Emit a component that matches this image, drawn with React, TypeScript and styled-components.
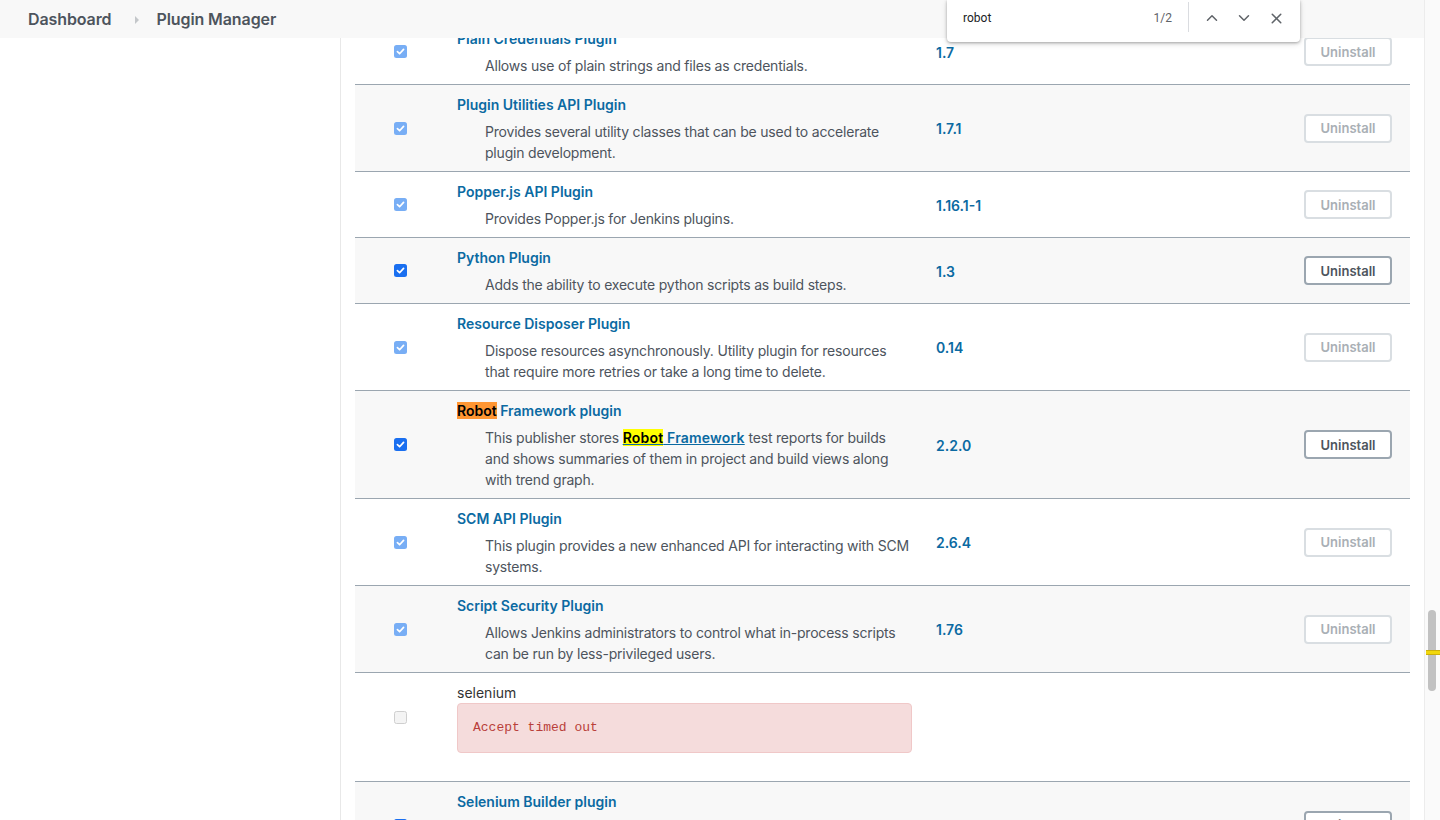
import React from "react";
import styled, { createGlobalStyle } from "styled-components";
import { ChevronUp, ChevronDown, X } from "lucide-react";

const GlobalStyle = createGlobalStyle`
  html, body {
    margin: 0;
    padding: 0;
    background: #ffffff;
  }
  body {
    font-family: "Inter", "Noto Sans", sans-serif;
    color: #4d545d;
  }
  * {
    box-sizing: border-box;
  }
`;

interface Plugin {
  name: string;
  description?: React.ReactNode;
  version?: string;
  canUninstall: boolean;
  checked: boolean;
  error?: string;
}

// description with the find-in-page highlight inside the link
function RobotDescription() {
  return (
    <>
      This publisher stores{" "}
      <DescLink href="#">
        <FindMatch>Robot</FindMatch> Framework
      </DescLink>{" "}
      test reports for builds and shows summaries of them in project and build
      views along with trend graph.
    </>
  );
}

const plugins: Plugin[] = [
  {
    name: "Plain Credentials Plugin",
    description: "Allows use of plain strings and files as credentials.",
    version: "1.7",
    canUninstall: false,
    checked: true,
  },
  {
    name: "Plugin Utilities API Plugin",
    description:
      "Provides several utility classes that can be used to accelerate plugin development.",
    version: "1.7.1",
    canUninstall: false,
    checked: true,
  },
  {
    name: "Popper.js API Plugin",
    description: "Provides Popper.js for Jenkins plugins.",
    version: "1.16.1-1",
    canUninstall: false,
    checked: true,
  },
  {
    name: "Python Plugin",
    description: "Adds the ability to execute python scripts as build steps.",
    version: "1.3",
    canUninstall: true,
    checked: true,
  },
  {
    name: "Resource Disposer Plugin",
    description:
      "Dispose resources asynchronously. Utility plugin for resources that require more retries or take a long time to delete.",
    version: "0.14",
    canUninstall: false,
    checked: true,
  },
  {
    name: "Robot Framework plugin",
    description: <RobotDescription />,
    version: "2.2.0",
    canUninstall: true,
    checked: true,
  },
  {
    name: "SCM API Plugin",
    description:
      "This plugin provides a new enhanced API for interacting with SCM systems.",
    version: "2.6.4",
    canUninstall: false,
    checked: true,
  },
  {
    name: "Script Security Plugin",
    description:
      "Allows Jenkins administrators to control what in-process scripts can be run by less-privileged users.",
    version: "1.76",
    canUninstall: false,
    checked: true,
  },
  {
    name: "selenium",
    error: "Accept timed out",
    canUninstall: false,
    checked: false,
  },
  {
    name: "Selenium Builder plugin",
    description:
      "This plugin allows you to run Selenium Builder scripts as a build step in your Jenkins jobs.",
    canUninstall: true,
    checked: true,
  },
];

function PluginTitle({ name }: { name: string }) {
  if (name.startsWith("Robot ")) {
    return (
      <TitleLink href="#">
        <ActiveMatch>Robot</ActiveMatch>
        {name.slice(5)}
      </TitleLink>
    );
  }
  return <TitleLink href="#">{name}</TitleLink>;
}

function CheckBox({ checked, disabled }: { checked: boolean; disabled: boolean }) {
  return (
    <Box role="checkbox" aria-checked={checked} $checked={checked} $disabled={disabled}>
      {checked && (
        <svg width="9" height="9" viewBox="0 0 10 10">
          <path
            d="M1.6 5.2 L4 7.5 L8.4 2.6"
            fill="none"
            stroke="#ffffff"
            strokeWidth="1.9"
            strokeLinecap="round"
            strokeLinejoin="round"
          />
        </svg>
      )}
    </Box>
  );
}

function PluginRow({ plugin, index }: { plugin: Plugin; index: number }) {
  return (
    <Row $shaded={index % 2 === 1} $error={!!plugin.error}>
      <CheckCell>
        <CheckBox checked={plugin.checked} disabled={!plugin.canUninstall} />
      </CheckCell>
      <NameCell>
        {plugin.error ? (
          <>
            <PlainName>{plugin.name}</PlainName>
            <ErrorBox>{plugin.error}</ErrorBox>
          </>
        ) : (
          <>
            <PluginTitle name={plugin.name} />
            {plugin.description && <Description>{plugin.description}</Description>}
          </>
        )}
      </NameCell>
      <VersionCell>
        {plugin.version && <VersionLink href="#">{plugin.version}</VersionLink>}
      </VersionCell>
      <ActionCell>
        {!plugin.error && (
          <UninstallButton disabled={!plugin.canUninstall}>Uninstall</UninstallButton>
        )}
      </ActionCell>
    </Row>
  );
}

export default function App() {
  return (
    <>
      <GlobalStyle />
      <Viewport>
        <Main>
          <Body>
            <Sidebar />
            <Content>
              <PluginTable>
                {plugins.map((p, i) => (
                  <PluginRow key={p.name} plugin={p} index={i} />
                ))}
              </PluginTable>
            </Content>
          </Body>

          <Header>
            <Crumb href="#">Dashboard</Crumb>
            <CrumbArrow />
            <Crumb href="#">Plugin Manager</Crumb>
          </Header>

          <FindBar>
            <FindInput>robot</FindInput>
            <FindCount>1/2</FindCount>
            <FindDivider />
            <FindButton>
              <ChevronUp size={18} strokeWidth={2} />
            </FindButton>
            <FindButton>
              <ChevronDown size={18} strokeWidth={2} />
            </FindButton>
            <FindButton>
              <X size={17} strokeWidth={2.2} />
            </FindButton>
          </FindBar>
        </Main>

        <ScrollLane>
          <ScrollThumb />
          <ScrollMarker />
        </ScrollLane>
      </Viewport>
    </>
  );
}

const Viewport = styled.div`
  display: flex;
  width: 100%;
  height: 820px;
  overflow: hidden;
`;

const Main = styled.div`
  position: relative;
  flex: 1;
  height: 100%;
  overflow: hidden;
`;

const Header = styled.header`
  position: absolute;
  top: 0;
  left: 0;
  right: 0;
  height: 38px;
  display: flex;
  align-items: center;
  padding-left: 28px;
  background: #f8f8f8;
  z-index: 2;
`;

const Crumb = styled.a`
  font-size: 16px;
  font-weight: 600;
  color: #4d545d;
  text-decoration: none;
  letter-spacing: -0.1px;
`;

const CrumbArrow = styled.span`
  width: 0;
  height: 0;
  margin: 1px 17px 0 24px;
  border-top: 4px solid transparent;
  border-bottom: 4px solid transparent;
  border-left: 4px solid #c4c7ca;
`;

const Body = styled.div`
  display: flex;
  height: 100%;
`;

const Sidebar = styled.aside`
  width: 341px;
  flex-shrink: 0;
  border-right: 1px solid #e8e8e8;
`;

const Content = styled.main`
  flex: 1;
  padding: 19px 14px 0 14px;
`;

const PluginTable = styled.div`
  display: flex;
  flex-direction: column;
  width: 1055px;
`;

const Row = styled.div<{ $shaded: boolean; $error: boolean }>`
  display: grid;
  grid-template-columns: 90px 479px 1fr 124px;
  align-items: center;
  background: ${(p) => (p.$shaded ? "#f8f8f8" : "#ffffff")};
  border-bottom: 1px solid #9ba6b0;
  padding-bottom: ${(p) => (p.$error ? "20px" : "0")};
`;

const CheckCell = styled.div`
  display: flex;
  justify-content: center;
`;

const Box = styled.span<{ $checked: boolean; $disabled: boolean }>`
  display: inline-flex;
  align-items: center;
  justify-content: center;
  width: 13px;
  height: 13px;
  border-radius: 2.5px;
  background: ${(p) =>
    !p.$checked ? "#f4f4f4" : p.$disabled ? "#78aef5" : "#1a6ff0"};
  border: ${(p) => (p.$checked ? "none" : "1px solid #cfcfcf")};
`;

const NameCell = styled.div`
  padding: 10px 12px 8px 12px;
  font-size: 14px;
  line-height: 20px;
`;

const TitleLink = styled.a`
  display: block;
  width: fit-content;
  font-size: 14px;
  line-height: 20px;
  font-weight: 600;
  color: #0b6aa2;
  text-decoration: none;
`;

const ActiveMatch = styled.mark`
  background: #ff9632;
  color: #000000;
`;

const FindMatch = styled.mark`
  background: #ffff00;
  color: #000000;
`;

const Description = styled.div`
  margin-top: 6px;
  padding-left: 28px;
  font-size: 14px;
  line-height: 21px;
  letter-spacing: -0.2px;
  color: #4d545d;
`;

const DescLink = styled.a`
  color: #0b6aa2;
  font-weight: 600;
  letter-spacing: 0.2px;
  text-decoration: underline;
`;

const PlainName = styled.div`
  font-size: 14px;
  line-height: 20px;
  color: #333333;
`;

const ErrorBox = styled.pre`
  margin: 0;
  height: 50px;
  display: flex;
  align-items: center;
  padding: 0 15px;
  background: #f5dcdc;
  border: 1px solid #f0c8c8;
  border-radius: 4px;
  font-family: "Liberation Mono", monospace;
  font-size: 13px;
  color: #b93f3a;
`;

const VersionCell = styled.div`
  padding: 0 12px;
`;

const VersionLink = styled.a`
  font-size: 14px;
  font-weight: 600;
  color: #0b6aa2;
  text-decoration: none;
`;

const ActionCell = styled.div`
  display: flex;
  justify-content: flex-end;
  padding-right: 18px;
`;

const UninstallButton = styled.button`
  width: 88px;
  height: 29px;
  padding: 0;
  background: #ffffff;
  border: 2px solid ${(p) => (p.disabled ? "#d9dee2" : "#9ba6b0")};
  border-radius: 4px;
  font-family: "Inter", sans-serif;
  font-size: 13px;
  font-weight: 600;
  color: ${(p) => (p.disabled ? "#a9afb5" : "#4d545d")};
  cursor: ${(p) => (p.disabled ? "default" : "pointer")};
`;

const FindBar = styled.div`
  position: absolute;
  top: 0;
  left: 947px;
  width: 353px;
  height: 42px;
  display: flex;
  align-items: center;
  padding: 0 8px 0 16px;
  background: #ffffff;
  border-radius: 0 0 4px 4px;
  box-shadow: 0 1px 3px rgba(0, 0, 0, 0.3), 0 2px 6px rgba(0, 0, 0, 0.12);
  z-index: 3;
`;

const FindInput = styled.span`
  flex: 1;
  font-family: "Roboto", sans-serif;
  font-size: 12px;
  color: #202124;
  margin-top: -6px;
`;

const FindCount = styled.span`
  font-family: "Roboto", sans-serif;
  font-size: 12px;
  color: #5f6368;
  margin: -6px 16px 0 0;
`;

const FindDivider = styled.span`
  width: 1px;
  height: 30px;
  margin: -8px 7px 0 0;
  background: #dadce0;
`;

const FindButton = styled.span`
  display: flex;
  align-items: center;
  justify-content: center;
  width: 32px;
  margin-top: -6px;
  color: #5f6368;
`;

const ScrollLane = styled.div`
  position: relative;
  width: 16px;
  flex-shrink: 0;
  background: #fafafa;
  border-left: 1px solid #ececec;
`;

const ScrollThumb = styled.div`
  position: absolute;
  top: 610px;
  left: 3px;
  width: 8px;
  height: 81px;
  border-radius: 4px;
  background: #c1c1c1;
`;

const ScrollMarker = styled.div`
  position: absolute;
  top: 650px;
  left: 1px;
  right: 0;
  height: 5px;
  background: #f1d70b;
  border-top: 1px solid #cdb00a;
  border-bottom: 1px solid #cdb00a;
`;
